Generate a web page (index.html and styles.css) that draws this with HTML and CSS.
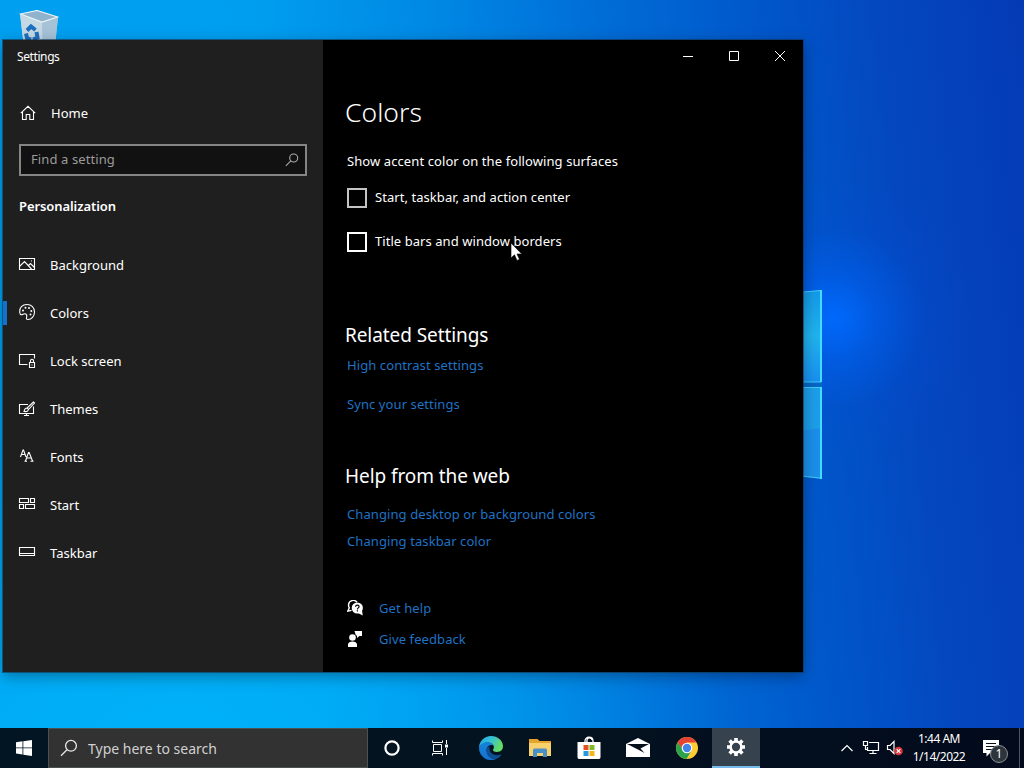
FILE: index.html
```
<!DOCTYPE html>
<html lang="en">
<head>
    <meta charset="UTF-8">
    <title>Settings</title>
    <link rel="stylesheet" href="styles.css">
</head>
<body>
    <div class="desktop">
        <svg class="wallpaper" width="1024" height="768" viewBox="0 0 1024 768">
            <defs>
                <linearGradient id="pane" x1="0" y1="0" x2="0" y2="1">
                    <stop offset="0" stop-color="#1398e8"/>
                    <stop offset=".5" stop-color="#20b3ee"/>
                    <stop offset="1" stop-color="#188ff0"/>
                </linearGradient>
            </defs>
            <path d="M780 294l42-4v92h-42z" fill="url(#pane)"/>
            <path d="M780 382h42v5h-42z" fill="#0567c4"/>
            <path d="M780 387h42v92l-42-5z" fill="#1b8fea"/>
            <path d="M780 387h42v41l-42 5z" fill="#1c9ee9"/>
            <path d="M780 294l41.200-3.500v91.500h-41M780 387.500h41.200v90.700l-41.200-4.500" fill="none" stroke="#3fc9fa" stroke-width="1"/>
            <path d="M821 290v92M821 387v92" stroke="#43dcff" stroke-width="2"/>
        </svg>

        <svg class="recycle-bin" width="42" height="46" viewBox="0 0 42 46">
            <path d="M1 4l17-3.500L39 7l-4 38H6z" fill="#b9d0e0"/>
            <path d="M1 4l22 8 1 33H6z" fill="#c5d8e4"/>
            <path d="M23 12l16-5-4 38H24z" fill="#a5c2d7"/>
            <path d="M1.500 4l16.500-3.500L38.500 7 23 12z" fill="#8fb3cd" stroke="#e9f2f6" stroke-width="1.200"/>
            <g fill="none" stroke="#1d6fc0" stroke-width="4">
                <path d="M8 20.500l4-4 4.500 3.500"/>
                <path d="M17.500 22l1 5.500-4.500 2"/>
                <path d="M12 29.500l-4-1.500-1-4.500"/>
            </g>
        </svg>

        <div class="window">
            <div class="sidebar">
                <div class="window-title">Settings</div>
                <div class="home">
                    <svg class="icon" width="16" height="16" viewBox="0 0 16 16"><path d="M.8 8.200L8 1.300l7.200 6.900M2.500 7v7.500h3.700V9.500h3.600v5h3.700V7"/></svg>
                    <span>Home</span>
                </div>
                <div class="search-box">
                    <span>Find a setting</span>
                    <svg class="icon" width="14" height="14" viewBox="0 0 14 14"><circle cx="8.700" cy="5" r="4"/><path d="M5.800 7.900L.8 12.900"/></svg>
                </div>
                <div class="category">Personalization</div>
                <div class="nav">
                    <div class="nav-item">
                        <svg class="icon" width="18" height="18" viewBox="0 0 18 18"><path d="M1.500 3.500h15v11h-15zM1.500 11.500L6.500 6.500l7 7.500M10.500 10.500l2-2 4 4"/><path d="M13 6h1"/></svg>
                        <span>Background</span>
                    </div>
                    <div class="nav-item active">
                        <svg class="icon" width="18" height="18" viewBox="0 0 18 18">
                            <path d="M1.700 9.500C1 4.500 4.500 1.500 9 1.500s7.500 3.200 7.500 7.500-3 7.500-6.500 7.500c-2.600 0-1.200-2-1.200-3.500 0-1.300-.6-2.300-2-2.300-1.600 0-2 1.100-3.400 1.100-1 0-1.500-.9-1.700-2.300z"/>
                            <g class="solid"><circle cx="5" cy="7.500" r="1"/><circle cx="7.500" cy="4.800" r="1"/><circle cx="11" cy="5" r="1"/><circle cx="13.300" cy="8" r="1"/><circle cx="12.500" cy="11.500" r="1"/></g>
                        </svg>
                        <span>Colors</span>
                    </div>
                    <div class="nav-item">
                        <svg class="icon" width="18" height="18" viewBox="0 0 18 18"><path d="M9.500 13.500h-8v-10h15v4M11.500 11.500h5v5h-5zM12.500 11.500V9.800a1.500 1.500 0 0 1 3 0v1.700M14 13.500v1"/></svg>
                        <span>Lock screen</span>
                    </div>
                    <div class="nav-item">
                        <svg class="icon" width="18" height="18" viewBox="0 0 18 18"><path d="M10 5.500H1.500v9h14V7.500M8.500 14.500v2M6 16.500h5M15.500 3L9 9l1.500 1.500L16.500 4zM9 9c-2 0-2.500 1-3 3.500 2 .3 4 .2 4.500-2"/></svg>
                        <span>Themes</span>
                    </div>
                    <div class="nav-item">
                        <svg class="icon" width="18" height="18" viewBox="0 0 18 18"><path d="M2.500 10L5 3h.5L8 10M3.500 7.500H7M7.500 14l3-8.500h.7l3.300 8.500M8.500 11h5M6.500 14.200h2.500M12.500 14.200h3"/></svg>
                        <span>Fonts</span>
                    </div>
                    <div class="nav-item">
                        <svg class="icon" width="18" height="18" viewBox="0 0 18 18"><path d="M1.500 3.500h9v4h-9zM12.500 3.500h4v4h-4zM1.500 9.500h4v4h-4zM7.500 9.500h9v4h-9z"/></svg>
                        <span>Start</span>
                    </div>
                    <div class="nav-item">
                        <svg class="icon" width="18" height="18" viewBox="0 0 18 18"><path d="M1.500 4.500h15v8h-15zM1.500 10.500h15"/></svg>
                        <span>Taskbar</span>
                    </div>
                </div>
            </div>

            <div class="content">
                <div class="caption-buttons">
                    <svg width="46" height="32" viewBox="0 0 46 32"><path d="M18 16.500h10"/></svg>
                    <svg width="46" height="32" viewBox="0 0 46 32"><path d="M18.500 11.500h9v9h-9z"/></svg>
                    <svg width="46" height="32" viewBox="0 0 46 32"><path d="M18 11l10 10M28 11L18 21"/></svg>
                </div>
                <h1>Colors</h1>
                <div class="label">Show accent color on the following surfaces</div>
                <div class="check"><span class="box"></span><span class="check-text">Start, taskbar, and action center</span></div>
                <div class="check hover"><span class="box"></span><span class="check-text">Title bars and window borders</span></div>

                <h2 class="related">Related Settings</h2>
                <a class="link first">High contrast settings</a>
                <a class="link second">Sync your settings</a>

                <h2 class="web">Help from the web</h2>
                <a class="link third">Changing desktop or background colors</a>
                <a class="link">Changing taskbar color</a>

                <div class="support">
                    <div class="support-item">
                        <svg width="16" height="16" viewBox="0 0 16 16">
                            <path d="M10 2.200A4.800 4.800 0 0 0 1.500 5c0 1.300.3 2 .8 2.900L.8 11.200l3.700-.8" fill="none" stroke="#fff" stroke-width="1.400"/>
                            <circle cx="10.300" cy="8" r="5.600" fill="#fff"/>
                            <path d="M10 12.500l5-2 .8 5z" fill="#fff"/>
                            <path d="M8.600 6.700c0-2 3.500-2 3.500 0 0 1.200-1.700 1.200-1.700 2.700M10.400 10.200v1.300" fill="none" stroke="#000" stroke-width="1.200"/>
                        </svg>
                        <a class="link">Get help</a>
                    </div>
                    <div class="support-item">
                        <svg width="16" height="16" viewBox="0 0 16 16" fill="#fff"><circle cx="5.500" cy="6.500" r="3.300"/><path d="M1 16v-2.500c0-4 9-4 9 0V16zM7.500 0H15v5h-2.500L10 7V5L8.500 3.500z"/></svg>
                        <a class="link">Give feedback</a>
                    </div>
                </div>
            </div>
        </div>

        <svg class="cursor" width="13" height="20" viewBox="0 0 13 20"><path d="M1 1v15l3.500-3.200L7 18.500l2.500-1.200L7 12h4.800z" fill="#fff" stroke="#000" stroke-width=".6"/></svg>

        <div class="taskbar">
            <div class="task start-button">
                <svg width="16" height="16" viewBox="0 0 16 16" fill="#fff"><path d="M0 2.200l6.500-.9v6.200H0zM7.300 1.200L16 0v7.500H7.300zM0 8.300h6.500v6.200L0 13.600zM7.300 8.300H16V16l-8.700-1.200z"/></svg>
            </div>
            <div class="task-search">
                <svg width="18" height="18" viewBox="0 0 18 18" fill="none" stroke="#e8e8e8" stroke-width="1.300"><circle cx="11" cy="6.800" r="5.400"/><path d="M7 10.700L1 16.800"/></svg>
                <span>Type here to search</span>
            </div>
            <div class="task">
                <svg width="18" height="18" viewBox="0 0 18 18"><circle cx="9" cy="9" r="6.600" fill="none" stroke="#fff" stroke-width="2.200"/></svg>
            </div>
            <div class="task">
                <svg width="18" height="18" viewBox="0 0 18 18" fill="none" stroke="#fff"><path d="M1.500 1.500v2h10v-2M2.500 5.500h8v7h-8zM1.500 16.500v-2h10v2M15.500 1v4M15.500 9v7"/><path d="M14 5.500h3v3h-3z" fill="#fff" stroke="none"/></svg>
            </div>
            <div class="pinned">
                <div class="task">
                    <svg width="24" height="24" viewBox="0 0 24 24">
                        <defs>
                            <linearGradient id="edge-top" x1="0" y1="0" x2="1" y2=".4"><stop offset="0" stop-color="#1aa5dd"/><stop offset=".5" stop-color="#35c1d8"/><stop offset="1" stop-color="#65dc63"/></linearGradient>
                            <linearGradient id="edge-low" x1="0" y1="0" x2="0" y2="1"><stop offset="0" stop-color="#1683d9"/><stop offset="1" stop-color="#1571cf"/></linearGradient>
                        </defs>
                        <path d="M0 12C0 5 5.500 0 12 0s12 4.500 12 10.300c0 3.700-2.700 5.700-6 5.700-2.500 0-4-1-4-2 0-.8.900-1.200.9-2.800C14.900 8.500 12 6.500 8.500 6.500 4.500 6.500 1 9 0 12z" fill="url(#edge-top)"/>
                        <path d="M0 12c.8-3.700 4.500-5.700 8.300-5.700 3.200 0 5.500 1.300 6.300 3-4.500-1-7 1.500-7 5 0 4.500 4 9.200 9.400 8.700A12 12 0 0 1 0 12z" fill="url(#edge-low)"/>
                        <path d="M10.500 10.300C8.500 11 7.500 12.500 7.500 14.500c0 4.500 4 8.500 8.500 8.500 3 0 6-3 6.500-4.800-7 3-13-1-12-7.900z" fill="#0d4f94"/>
                    </svg>
                </div>
                <div class="task">
                    <svg width="22" height="20" viewBox="0 0 22 20"><path d="M0 1h8.500l2 2H22v15H0z" fill="#e5a52c"/><path d="M0 5h22v13H0z" fill="#f8d06c"/><path d="M4 12a1.500 1.500 0 0 1 1.500-1.500h11A1.500 1.500 0 0 1 18 12v7h-4v-4H8v4H4z" fill="#4a90c8"/></svg>
                </div>
                <div class="task">
                    <svg width="24" height="24" viewBox="0 0 24 24"><path d="M8 7V5c0-5 8-5 8 0v2M10 7V4c0-3 5-3 5 0" fill="none" stroke="#fff" stroke-width="1.300"/><path d="M.5 6h23v15.500a2 2 0 0 1-2 1.500h-19a2 2 0 0 1-2-1.500z" fill="#fff"/><path d="M6.500 9h5v5h-5z" fill="#e84e23"/><path d="M12.500 9h5v5h-5z" fill="#7eb928"/><path d="M6.500 15h5v5h-5z" fill="#2699df"/><path d="M12.500 15h5v5h-5z" fill="#f5b51b"/></svg>
                </div>
                <div class="task">
                    <svg width="24" height="20" viewBox="0 0 24 20"><path d="M0 6l12-6 12 6v13H0z" fill="#fff"/><path d="M1 6h22l-8.500 4.500L18.500 15 11 11z" fill="#06101b"/></svg>
                </div>
                <div class="task">
                    <svg width="24" height="24" viewBox="0 0 24 24"><circle cx="12" cy="12" r="11" fill="#fc3"/><path d="M2.500 6.500a11 11 0 0 1 19 0H12L8 14z" fill="#e64335"/><path d="M2.500 6.500A11 11 0 0 0 11.500 23l5-8.500-7 1z" fill="#2ba24c"/><circle cx="12" cy="12" r="5.300" fill="#fff"/><circle cx="12" cy="12" r="4.200" fill="#4285e8"/></svg>
                </div>
            </div>
            <div class="task current">
                <svg width="20" height="20" viewBox="0 0 20 20"><circle cx="10" cy="10" r="5.400" fill="none" stroke="#fff" stroke-width="2.500"/><path d="M10 1v3.500M10 15.500V19M1 10h3.500M15.500 10H19M3.600 3.600l2.500 2.500M13.900 13.900l2.500 2.500M16.400 3.600l-2.500 2.500M6.100 13.900l-2.500 2.500" stroke="#fff" stroke-width="3.600"/></svg>
            </div>
            <div class="tray">
                <svg class="chevron" width="14" height="10" viewBox="0 0 14 10"><path d="M1.500 8L7 2.500 12.500 8"/></svg>
                <svg class="network" width="18" height="16" viewBox="0 0 18 16"><path d="M7 2.500h9.500v8h-11V7M1.500 1.500h4v4h-4zM3.500 5.500v4h2M11 10.500v3M7.500 13.500h7"/></svg>
                <svg class="volume" width="18" height="18" viewBox="0 0 18 18"><path d="M1.500 6.500H4l4-4v12l-4-4H1.500z"/><circle cx="12.500" cy="12" r="4.300" fill="#d8353b" stroke="none"/><path d="M10.700 10.200l3.600 3.600M14.300 10.200l-3.600 3.600"/></svg>
                <div class="clock"><div>1:44 AM</div><div>1/14/2022</div></div>
                <div class="notifications">
                    <svg width="16" height="17" viewBox="0 0 16 17"><path d="M0 0h16v13H7l-3.500 3.500V13H0z" fill="#fff"/><path d="M3 3.500h10M3 6.500h10M3 9.500h7" stroke="#06101b"/></svg>
                    <span class="count">1</span>
                </div>
                <div class="show-desktop"></div>
            </div>
        </div>
    </div>
</body>
</html>
```
FILE: styles.css
```
body { margin: 0; font-family: "Noto Sans", "Open Sans", sans-serif; font-size: 13px; color: #fff; overflow: hidden; }

.desktop {
    position: relative;
    width: 1024px;
    height: 768px;
    display: flex;
    flex-direction: column;
    justify-content: flex-end;
    background:
        radial-gradient(circle at 834px 318px, rgba(0,106,255,.95) 0, rgba(0,98,245,.5) 45px, rgba(0,80,225,.15) 90px, rgba(0,80,220,0) 140px),
        radial-gradient(ellipse 560px 300px at 180px 740px, rgba(0,190,255,.6), rgba(0,180,255,0)),
        linear-gradient(84deg, #00a0f0 0%, #009eef 30%, #0087e4 47%, #006cd6 62%, #0057ca 76%, #0447bf 87%, #043bb5 100%);
}
.wallpaper { position: absolute; left: 0; top: 0; }
.recycle-bin { position: absolute; left: 19px; top: 10px; }

/* settings window */
.window {
    position: absolute;
    left: 3px;
    top: 40px;
    width: 800px;
    height: 632px;
    display: flex;
    background: #000;
    box-shadow: 0 0 0 1px rgba(20,50,80,.6), 0 4px 14px rgba(0,0,0,.35);
}
.sidebar { width: 320px; background: #1f1f1f; }
.window-title { height: 33px; line-height: 34px; padding-left: 14px; font-size: 12px; letter-spacing: -.4px; }
.icon { fill: none; stroke: #fff; stroke-width: 1.1; }
.icon .solid { fill: #fff; stroke: none; }
.home { display: flex; align-items: center; gap: 15px; height: 40px; margin-top: 20px; padding-left: 17px; }
.search-box {
    display: flex;
    align-items: center;
    justify-content: space-between;
    box-sizing: border-box;
    width: 288px;
    height: 32px;
    margin: 11px 0 0 16px;
    padding: 0 6px 0 10px;
    border: 2px solid #858585;
    background: #111;
    color: #9b9b9b;
}
.search-box span { padding-bottom: 2px; letter-spacing: .1px; }
.search-box .icon { stroke: #aaa; }
.category { height: 20px; line-height: 20px; margin: 20px 0 0 16px; font-weight: 600; letter-spacing: -.08px; }
.nav { margin-top: 25px; }
.nav-item { display: flex; align-items: center; gap: 14px; height: 48px; padding-left: 15px; }
.nav-item .icon { margin-bottom: 2px; }
.nav-item.active {
    background: linear-gradient(#1373c9, #1373c9) 0 12px / 4px 24px no-repeat;
}

.content { flex: 1; padding-left: 23px; }
.caption-buttons { display: flex; justify-content: flex-end; height: 32px; }
.caption-buttons path { fill: none; stroke: #fff; }
h1 { margin: 20px 0 0 -1px; height: 40px; line-height: 40px; font-size: 26.500px; font-weight: 300; }
.label { height: 20px; line-height: 20px; margin: 19px 0 15px 1px; letter-spacing: .09px; }
.check { display: flex; align-items: center; gap: 8px; height: 24px; margin: 0 0 20px 1px; }
.check-text { padding-bottom: 2px; letter-spacing: .06px; }
.box { box-sizing: border-box; width: 20px; height: 20px; border: 2px solid #c4c4c4; }
.check.hover .box { border-color: #fff; }
h2 { margin: 0 0 0 -1px; height: 28px; line-height: 28px; font-size: 19px; font-weight: 400; letter-spacing: -.08px; }
h2.related { margin-top: 67px; }
h2.web { margin-top: 48px; }
.link { display: block; height: 20px; line-height: 20px; margin: 7px 0 0 1px; color: #1f72c4; letter-spacing: .09px; }
.link.first { margin-top: 6px; }
.link.second { margin-top: 19px; }
.link.third { margin-top: 14px; }
.support { margin-top: 41px; }
.support-item { display: flex; align-items: center; gap: 16px; height: 31px; padding-left: 1px; }
.support-item .link { margin: 0; }

.cursor { position: absolute; left: 510px; top: 242px; }

/* taskbar */
.taskbar { position: relative; display: flex; height: 40px; background: linear-gradient(90deg, #021522, #041320 50%, #020a1c); }
.task { flex: none; width: 48px; display: flex; align-items: center; justify-content: center; }
.pinned { flex: none; display: flex; gap: 1px; padding: 0 1px 0 3px; }
.task.current { box-sizing: border-box; background: #36424e; border-bottom: 2px solid #76b9ed; }
.task-search {
    flex: none;
    box-sizing: border-box;
    width: 320px;
    display: flex;
    align-items: center;
    gap: 10px;
    padding-left: 11px;
    border: 1px solid #4b5153;
    background: #323232;
    color: #d0d0d0;
    font-size: 14px;
}
.tray { display: flex; flex: 1; align-items: center; justify-content: flex-end; }
.tray > svg { flex: none; fill: none; stroke: #fff; stroke-width: 1.2; }
.network { margin-left: 8px; }
.volume { margin-left: 6px; }
.clock { width: 66px; margin-left: 2px; font-size: 12px; line-height: 18px; text-align: center; letter-spacing: -.5px; }
.notifications { position: relative; width: 24px; height: 24px; margin-left: 11px; padding-top: 4px; box-sizing: border-box; }
.count {
    position: absolute;
    left: 7px;
    top: 9px;
    width: 16px;
    height: 16px;
    border: 1px solid #8a8f94;
    border-radius: 50%;
    background: #2d343c;
    font-size: 12px;
    line-height: 16px;
    text-align: center;
}
.show-desktop { width: 4px; height: 40px; margin-left: 12px; border-left: 1px solid #4c5560; }
```
